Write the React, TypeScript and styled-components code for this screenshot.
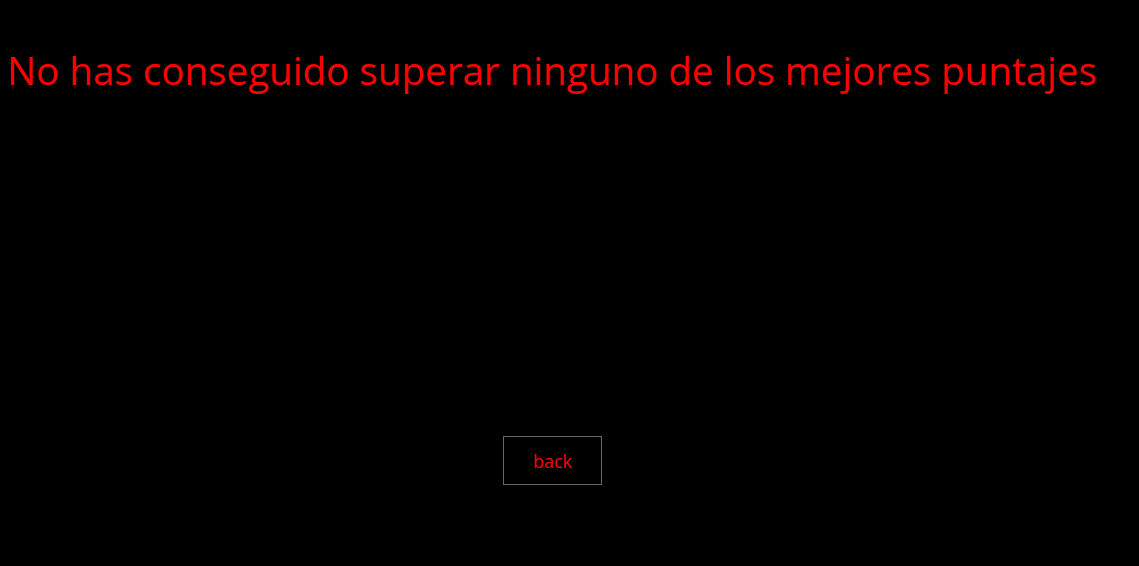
import React from "react";
import styled, { createGlobalStyle } from "styled-components";

const Global = createGlobalStyle`
  html, body { margin: 0; padding: 0; background: #000; }
  body { font-family: "Comic Sans MS", "Open Sans", sans-serif; }
`;

const Page = styled.main`
  width: 1139px;
  height: 566px;
  background: #000;
  display: flex;
  flex-direction: column;
  padding: 46px 0 0 7px;
  box-sizing: border-box;
`;

const Title = styled.h1`
  margin: 0;
  font-family: "Comic Sans MS", "Open Sans", sans-serif;
  font-weight: 400;
  font-size: 38.6px;
  line-height: 48px;
  color: #ff0000;
  white-space: nowrap;
`;

const Actions = styled.div`
  display: flex;
  padding: 342px 0 0 496px;
`;

const BackButton = styled.button`
  width: 99px;
  height: 49px;
  background: #000;
  border: 1px solid #666;
  color: #ff0000;
  font-family: "Comic Sans MS", "Open Sans", sans-serif;
  font-size: 18px;
  cursor: pointer;
  padding: 0;
`;

export default function App() {
  return (
    <>
      <Global />
      <Page>
        <Title>No has conseguido superar ninguno de los mejores puntajes</Title>
        <Actions>
          <BackButton>back</BackButton>
        </Actions>
      </Page>
    </>
  );
}
